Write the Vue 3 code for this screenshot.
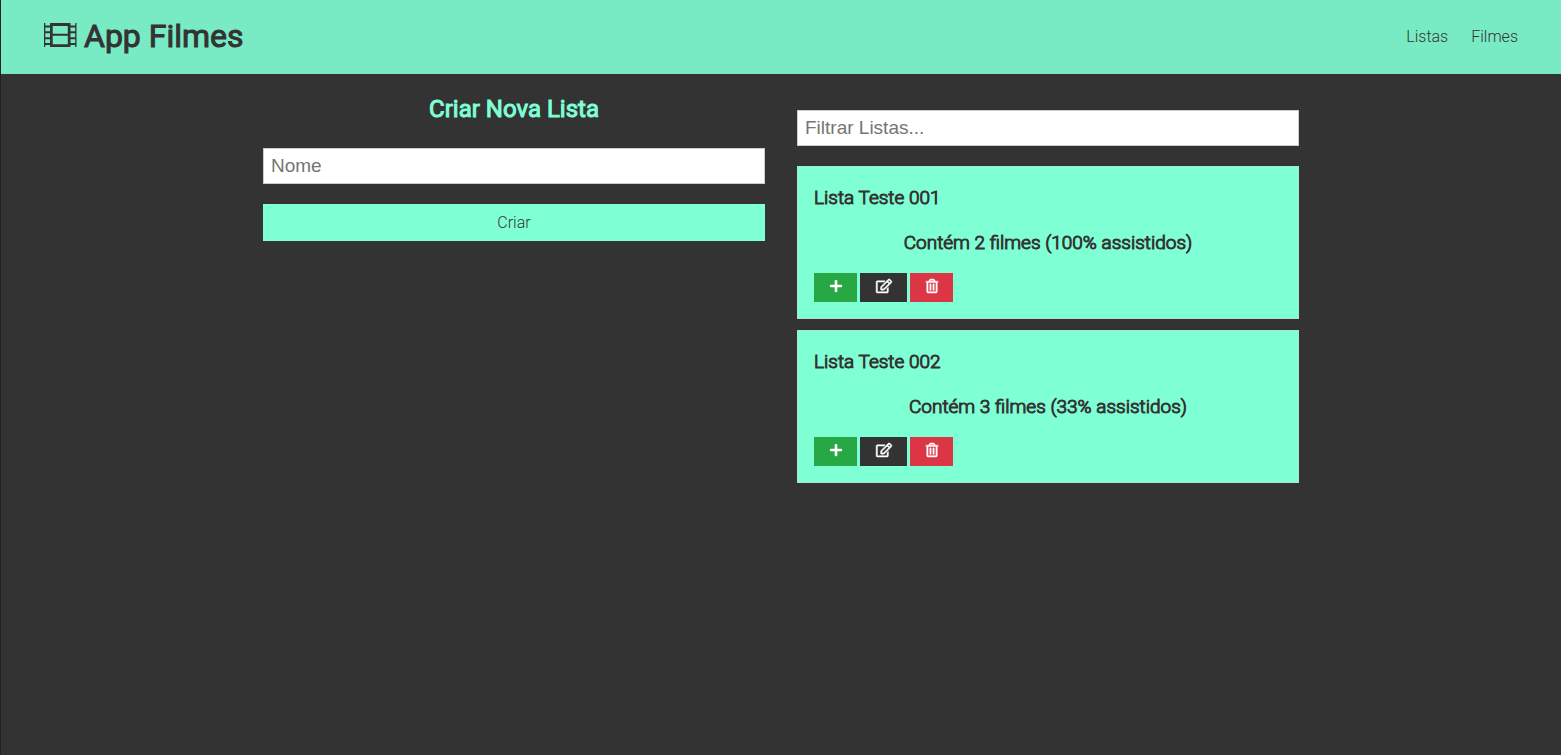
<script setup>
import { ref, computed } from 'vue'

const name = ref('')
const filter = ref('')
const lists = ref([
  { id: 1, title: 'Lista Teste 001', summary: 'Contém 2 filmes (100% assistidos)' },
  { id: 2, title: 'Lista Teste 002', summary: 'Contém 3 filmes (33% assistidos)' }
])
const visibleLists = computed(() =>
  lists.value.filter((l) => l.title.toLowerCase().includes(filter.value.toLowerCase()))
)
</script>

<template>
  <div class="app">
    <header class="navbar">
      <h1 class="brand">
        <svg class="film" viewBox="0 0 33 26" aria-hidden="true">
          <path d="M0 0h1.300v24H0zM31.200 0h1.300v24h-1.300zM6 0h20.500v3H6zM6 10.700h20.500v2H6zM6 21.200h20.500V24H6zM6 0h2.700v24H6zM23.800 0h2.700v24h-2.700zM0 2.500h6v2H0zM0 8.200h6v2H0zM0 14.200h6v2H0zM0 20h6v2H0zM26 2.500h6v2h-6zM26 8.200h6v2h-6zM26 14.200h6v2h-6zM26 20h6v2h-6z" />
        </svg>
        <span>App Filmes</span>
      </h1>
      <nav class="links">
        <a href="#listas">Listas</a>
        <a href="#filmes">Filmes</a>
      </nav>
    </header>

    <main class="container">
      <form class="create" @submit.prevent>
        <h2>Criar Nova Lista</h2>
        <input v-model="name" class="field" type="text" placeholder="Nome" aria-label="Nome" />
        <button class="submit" type="submit">Criar</button>
      </form>

      <section class="lists">
        <input v-model="filter" class="field" type="text" placeholder="Filtrar Listas..." aria-label="Filtrar Listas" />
        <article v-for="list in visibleLists" :key="list.id" class="card">
          <h3>{{ list.title }}</h3>
          <p class="summary">{{ list.summary }}</p>
          <div class="actions">
            <button class="btn add" type="button" aria-label="Adicionar">
              <svg width="14" height="16" viewBox="0 0 448 512"><path d="M416 208H272V64c0-17.67-14.33-32-32-32h-32c-17.67 0-32 14.33-32 32v144H32c-17.67 0-32 14.33-32 32v32c0 17.67 14.33 32 32 32h144v144c0 17.67 14.33 32 32 32h32c17.67 0 32-14.33 32-32V304h144c17.67 0 32-14.33 32-32v-32c0-17.67-14.33-32-32-32z" /></svg>
            </button>
            <button class="btn edit" type="button" aria-label="Editar">
              <svg width="16" height="14" viewBox="0 0 576 512"><path d="M402.3 344.9l32-32c5-5 13.700-1.500 13.700 5.700V464c0 26.500-21.500 48-48 48H48c-26.500 0-48-21.500-48-48V112c0-26.500 21.500-48 48-48h273.500c7.100 0 10.700 8.600 5.700 13.700l-32 32c-1.500 1.500-3.500 2.300-5.700 2.300H48v352h352V350.500c0-2.100.8-4.100 2.300-5.600zm156.600-201.800L296.300 405.700l-90.400 10c-26.200 2.900-48.500-19.200-45.600-45.600l10-90.400L432.900 17.100c22.900-22.900 59.900-22.900 82.700 0l43.200 43.200c22.900 22.900 22.900 60 .1 82.800zM460.100 174L402 115.900 216.200 301.800l-7.300 65.300 65.300-7.300L460.100 174zm64.800-79.700l-43.200-43.200c-4.100-4.100-10.800-4.100-14.800 0L436 82l58.100 58.100 30.900-30.900c4-4.200 4-10.800-.1-14.900z" /></svg>
            </button>
            <button class="btn remove" type="button" aria-label="Excluir">
              <svg width="14" height="16" viewBox="0 0 448 512"><path d="M268 416h24a12 12 0 0 0 12-12V188a12 12 0 0 0-12-12h-24a12 12 0 0 0-12 12v216a12 12 0 0 0 12 12zM432 80h-82.410l-34-56.700A48 48 0 0 0 274.410 0H173.590a48 48 0 0 0-41.160 23.300L98.410 80H16A16 16 0 0 0 0 96v16a16 16 0 0 0 16 16h16v336a48 48 0 0 0 48 48h288a48 48 0 0 0 48-48V128h16a16 16 0 0 0 16-16V96a16 16 0 0 0-16-16zM171.840 50.910A6 6 0 0 1 177 48h94a6 6 0 0 1 5.150 2.910L293.610 80H154.390zM368 464H80V128h288zm-212-48h24a12 12 0 0 0 12-12V188a12 12 0 0 0-12-12h-24a12 12 0 0 0-12 12v216a12 12 0 0 0 12 12z" /></svg>
            </button>
          </div>
        </article>
      </section>
    </main>
  </div>
</template>

<style>
body {
  background: #333;
}
</style>

<style scoped>
.app {
  box-sizing: border-box;
  min-height: 100vh;
  border-left: 1px solid #20202a;
  background: #333;
  color: #333;
  font-family: Roboto, sans-serif;
  font-size: 16px;
  font-weight: 300;
  line-height: 26px;
}
.app *,
.app *::before {
  box-sizing: border-box;
}
.navbar {
  display: flex;
  align-items: center;
  justify-content: space-between;
  height: 74px;
  padding: 0 43px;
  background: #78ebc4;
}
.brand {
  display: flex;
  align-items: center;
  gap: 7px;
  margin: 0;
  padding-bottom: 2px;
  font-size: 32px;
  line-height: 40px;
}
.brand,
.create h2 {
  font-weight: 400;
  -webkit-text-stroke: 1px currentColor;
}
.film {
  width: 33px;
  height: 26px;
  fill: #333;
}
.links {
  display: flex;
  gap: 23px;
}
.links a {
  color: #333;
  text-decoration: none;
}
.container {
  display: grid;
  grid-template-columns: repeat(2, minmax(0, 1fr));
  gap: 32px;
  max-width: 1100px;
  margin: 0 auto;
  padding: 16px 32px;
}
.create h2 {
  margin: 0 0 20px;
  color: #7fffd4;
  font-size: 24px;
  line-height: 38px;
  text-align: center;
}
.field {
  display: block;
  width: 100%;
  height: 36px;
  margin: 0 0 20px;
  padding: 0 7px;
  border: 1px solid #ccc;
  border-radius: 0;
  background: #fff;
  color: #333;
  font-family: "Liberation Sans", Arial, sans-serif;
  font-size: 19px;
}
.field::placeholder {
  color: #757575;
}
.submit {
  display: block;
  width: 100%;
  height: 37px;
  padding: 0;
  border: 0;
  background: #7fffd4;
  color: #333;
  font: inherit;
}
.lists {
  padding-top: 20px;
}
.card {
  margin-bottom: 11px;
  padding: 16px;
  border: 1px dotted #ccc;
  background: #7fffd4;
}
.card h3,
.summary {
  margin: 0 0 15px;
  font-size: 19px;
  line-height: 30px;
  font-weight: 300;
  -webkit-text-stroke: 1px currentColor;
}
.summary {
  text-align: center;
}
.actions {
  display: flex;
  gap: 3px;
}
.btn {
  display: flex;
  align-items: center;
  justify-content: center;
  width: 43px;
  height: 29px;
  padding: 0 0 3px;
  border: 0;
}
.btn svg {
  height: 14px;
  fill: #fff;
  overflow: visible;
}
.edit svg,
.remove svg {
  stroke: #fff;
  stroke-width: 18;
}
.add {
  background: #28a745;
}
.edit {
  width: 47px;
  background: #333;
}
.remove {
  background: #dc3545;
}
</style>
